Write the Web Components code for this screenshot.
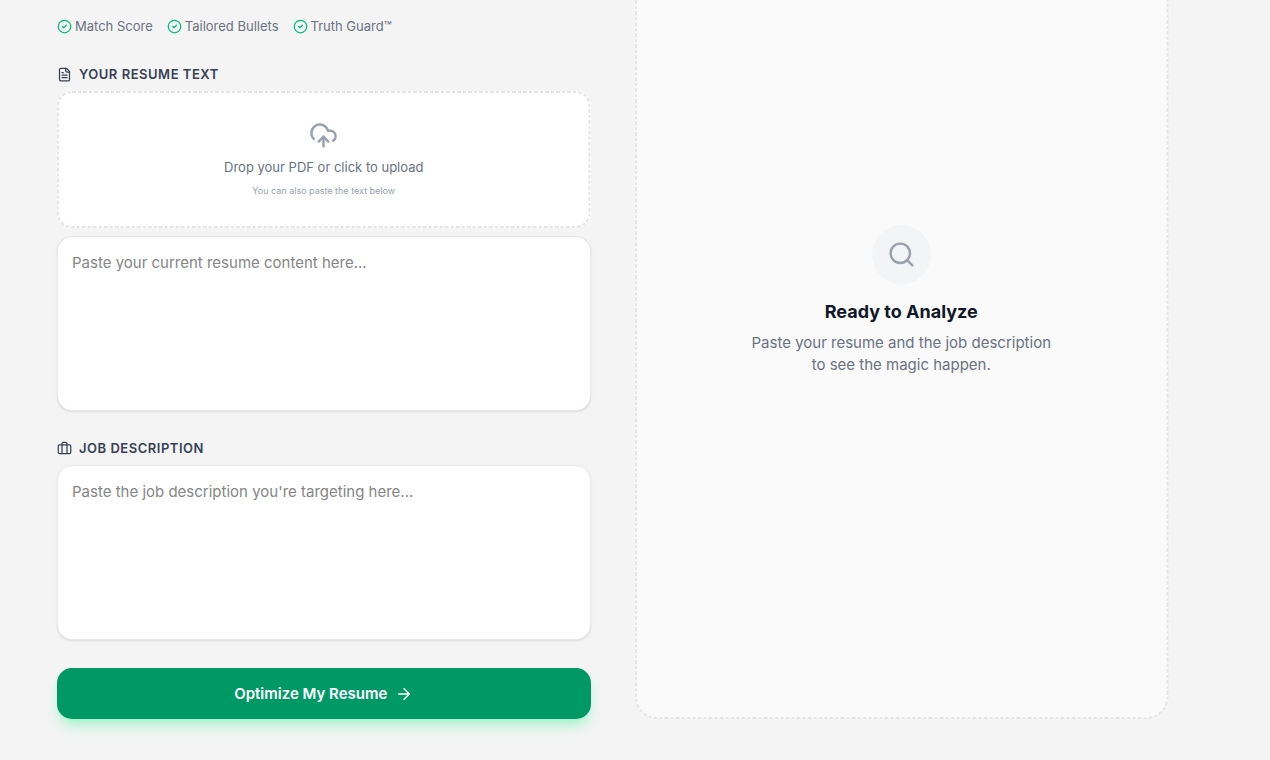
<!DOCTYPE html>
<html lang="en">
<head>
<meta charset="utf-8">
<meta name="viewport" content="width=device-width, initial-scale=1">
<title>Resume Optimizer</title>
<style>
  body { margin: 0; background: #f4f4f4; color: #101828; font-family: Inter, "Liberation Sans", sans-serif; font-size: 15px; }
</style>
</head>
<body>
<resume-page>
  <feature-list>
    <feature-item>Match Score</feature-item>
    <feature-item>Tailored Bullets</feature-item>
    <feature-item>Truth Guard™</feature-item>
  </feature-list>
  <text-field icon="file" label="Your Resume Text" placeholder="Paste your current resume content here...">
    <file-drop heading="Drop your PDF or click to upload" hint="You can also paste the text below"></file-drop>
  </text-field>
  <text-field icon="briefcase" label="Job Description" placeholder="Paste the job description you're targeting here..."></text-field>
  <primary-button>Optimize My Resume</primary-button>
  <empty-state slot="result" heading="Ready to Analyze">Paste your resume and the job description to see the magic happen.</empty-state>
</resume-page>

<script>
const ICONS = {
  check: '<circle cx="12" cy="12" r="10"/><path d="m9 12 2 2 4-4"/>',
  file: '<path d="M15 2H6a2 2 0 0 0-2 2v16a2 2 0 0 0 2 2h12a2 2 0 0 0 2-2V7Z"/><path d="M14 2v4a2 2 0 0 0 2 2h4"/><path d="M10 9H8"/><path d="M16 13H8"/><path d="M16 17H8"/>',
  briefcase: '<path d="M16 20V4a2 2 0 0 0-2-2h-4a2 2 0 0 0-2 2v16"/><rect width="20" height="14" x="2" y="6" rx="2"/>',
  upload: '<path d="M12 13v8"/><path d="M4 14.899A7 7 0 1 1 15.71 8h1.79a4.5 4.5 0 0 1 2.5 8.242"/><path d="m8 17 4-4 4 4"/>',
  search: '<path d="m21 21-4.34-4.34"/><circle cx="11" cy="11" r="8"/>',
  arrow: '<path d="M5 12h14"/><path d="m12 5 7 7-7 7"/>'
};

class BaseElement extends HTMLElement {
  connectedCallback() {
    if (this.shadowRoot) return;
    this.attachShadow({ mode: 'open' }).innerHTML =
      `<style>*, *::before, *::after { box-sizing: border-box; } ${this.constructor.styles}</style>${this.render()}`;
  }
  attr(name) { return this.getAttribute(name) || ''; }
}

customElements.define('line-icon', class extends BaseElement {
  static styles = `
    :host { display: block; flex: none; width: var(--icon-size, 15px); height: var(--icon-size, 15px); }
    svg { display: block; width: 100%; height: 100%; }`;
  render() {
    return `<svg viewBox="0 0 24 24" fill="none" stroke="currentColor" stroke-width="2" stroke-linecap="round" stroke-linejoin="round" aria-hidden="true">${ICONS[this.attr('name')]}</svg>`;
  }
});

/* Fine dashed outline laid over its positioned parent. --bleed carries the outline past the parent's top edge. */
customElements.define('dashed-frame', class extends BaseElement {
  static styles = `
    :host { display: block; position: absolute; inset: 0; pointer-events: none; }
    svg { display: block; width: 100%; height: 100%; overflow: visible; }
    rect { x: 1px; y: calc(1px - var(--bleed, 0px)); width: calc(100% - 2px); height: calc(100% - 2px + var(--bleed, 0px)); rx: var(--radius, 14px); fill: none; stroke: #e5e5e7; stroke-width: 2px; stroke-dasharray: 4 2 3 2; }`;
  render() { return `<svg aria-hidden="true"><rect/></svg>`; }
});

customElements.define('resume-page', class extends BaseElement {
  static styles = `
    :host { display: block; overflow-x: hidden; }
    main { display: grid; grid-template-columns: minmax(0, 1fr) minmax(0, 1fr); gap: 44px; padding: 0 102px 40px 57px; }
    section { display: flex; flex-direction: column; gap: 28px; padding-top: 16px; }`;
  render() {
    return `<main><section><slot></slot></section><slot name="result"></slot></main>`;
  }
});

customElements.define('feature-list', class extends BaseElement {
  static styles = `:host { display: flex; flex-wrap: wrap; gap: 14px; font-size: 13px; line-height: 21px; color: #6a7282; }`;
  render() { return `<slot></slot>`; }
});

customElements.define('feature-item', class extends BaseElement {
  static styles = `
    :host { display: flex; align-items: center; gap: 3px; }
    line-icon { color: #00bc7d; }`;
  render() { return `<line-icon name="check"></line-icon><span><slot></slot></span>`; }
});

customElements.define('text-field', class extends BaseElement {
  static styles = `
    :host { display: flex; flex-direction: column; gap: 8px; }
    label { display: flex; align-items: center; gap: 7px; font-size: 13px; line-height: 18px; font-weight: 600; letter-spacing: 0.04em; text-transform: uppercase; color: #364153; }
    textarea { display: block; width: 100%; height: 175px; margin: 0; padding: 15px 14px; border: 1px solid #e9e9eb; border-radius: 15px; background: #fff; box-shadow: 0 1px 3px rgba(0,0,0,.08), 0 1px 2px -1px rgba(0,0,0,.1); color: #101828; font: inherit; font-size: 15px; line-height: 22px; resize: none; outline: none; }
    textarea:focus { border-color: #009966; }
    textarea::placeholder { color: #868686; opacity: 1; }`;
  render() {
    return `<label for="text"><line-icon name="${this.attr('icon')}"></line-icon>${this.attr('label')}</label>
      <slot></slot>
      <textarea id="text" placeholder="${this.attr('placeholder')}"></textarea>`;
  }
});

customElements.define('file-drop', class extends BaseElement {
  static styles = `
    :host { display: block; }
    label { display: flex; flex-direction: column; align-items: center; gap: 8px; position: relative; padding: 30px; border-radius: 15px; background: #fff; text-align: center; cursor: pointer; }
    line-icon { --icon-size: 29px; color: #99a1af; }
    .heading { font-size: 13px; line-height: 18px; color: #6a7282; }
    .hint { font-size: 9px; line-height: 14px; color: #99a1af; }
    input { position: absolute; inset: 0; width: 100%; height: 100%; opacity: 0; cursor: pointer; }`;
  render() {
    return `<label for="file"><dashed-frame></dashed-frame><line-icon name="upload"></line-icon>
      <span class="heading">${this.attr('heading')}</span>
      <span class="hint">${this.attr('hint')}</span>
      <input id="file" type="file" accept="application/pdf"></label>`;
  }
});

customElements.define('primary-button', class extends BaseElement {
  static styles = `
    :host { display: block; }
    button { display: flex; align-items: center; justify-content: center; gap: 8px; width: 100%; margin: 0; padding: 14px; border: 0; border-radius: 15px; background: #009966; color: #fff; font: inherit; font-size: 15px; line-height: 23px; font-weight: 600; box-shadow: 0 9px 14px -3px #a4f4cf, 0 4px 6px -4px #a4f4cf; cursor: pointer; }
    line-icon { --icon-size: 18px; }`;
  render() { return `<button type="button"><slot></slot><line-icon name="arrow"></line-icon></button>`; }
});

customElements.define('empty-state', class extends BaseElement {
  static styles = `
    :host { display: flex; flex-direction: column; align-items: center; position: relative; padding: 225px 30px 30px; border-radius: 0 0 22px 22px; background: #fafafa; text-align: center; }
    dashed-frame { --radius: 21px; --bleed: 30px; }
    .badge { display: grid; place-items: center; width: 59px; height: 59px; border-radius: 50%; background: #f3f4f6; color: #99a1af; }
    line-icon { --icon-size: 29px; }
    h2 { margin: 15px 0 7px; font-size: 18px; line-height: 26px; font-weight: 700; color: #101828; }
    p { margin: 0; max-width: 300px; font-size: 15px; line-height: 22px; color: #6a7282; }`;
  render() {
    return `<dashed-frame></dashed-frame><div class="badge"><line-icon name="search"></line-icon></div><h2>${this.attr('heading')}</h2><p><slot></slot></p>`;
  }
});
</script>
</body>
</html>
